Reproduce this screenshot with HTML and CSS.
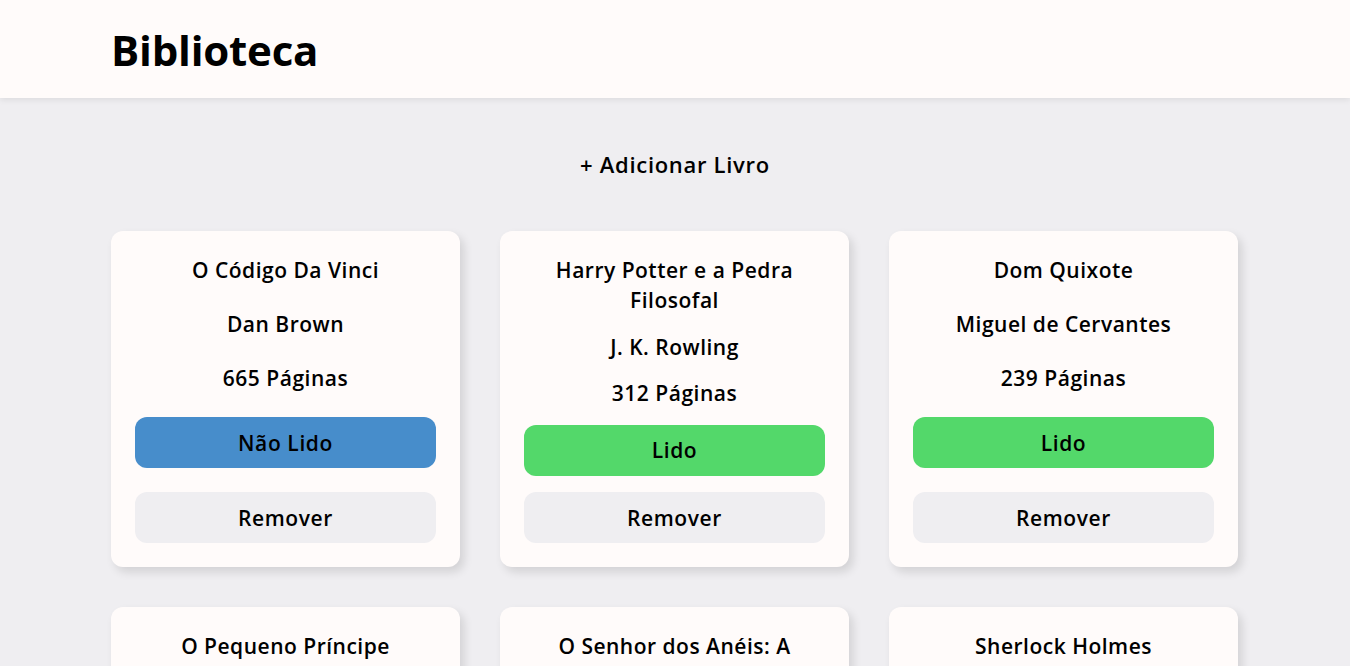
FILE: index.html
```html
<!DOCTYPE html>
<html lang="pt-BR">
<head>
<meta charset="utf-8">
<title>Biblioteca</title>
<link rel="stylesheet" href="styles.css">
</head>
<body>
<header class="topbar">
  <div class="wrap">
    <h1 class="brand">Biblioteca</h1>
  </div>
</header>
<main class="wrap main">
  <button class="add-btn">+ Adicionar Livro</button>
  <section class="grid">
    <article class="card">
      <p class="title">O Código Da Vinci</p>
      <p>Dan Brown</p>
      <p>665 Páginas</p>
      <button class="btn unread">Não Lido</button>
      <button class="btn remove">Remover</button>
    </article>
    <article class="card">
      <p class="title">Harry Potter e a Pedra Filosofal</p>
      <p>J. K. Rowling</p>
      <p>312 Páginas</p>
      <button class="btn read">Lido</button>
      <button class="btn remove">Remover</button>
    </article>
    <article class="card">
      <p class="title">Dom Quixote</p>
      <p>Miguel de Cervantes</p>
      <p>239 Páginas</p>
      <button class="btn read">Lido</button>
      <button class="btn remove">Remover</button>
    </article>
    <article class="card">
      <p class="title">O Pequeno Príncipe</p>
      <p>Antoine de Saint-Exupéry</p>
      <p>96 Páginas</p>
      <button class="btn read">Lido</button>
      <button class="btn remove">Remover</button>
    </article>
    <article class="card">
      <p class="title">O Senhor dos Anéis: A Sociedade do Anel</p>
      <p>J. R. R. Tolkien</p>
      <p>576 Páginas</p>
      <button class="btn unread">Não Lido</button>
      <button class="btn remove">Remover</button>
    </article>
    <article class="card">
      <p class="title">Sherlock Holmes</p>
      <p>Arthur Conan Doyle</p>
      <p>480 Páginas</p>
      <button class="btn read">Lido</button>
      <button class="btn remove">Remover</button>
    </article>
  </section>
</main>
</body>
</html>
```

FILE: styles.css
```css
* {
  box-sizing: border-box;
}

html, body {
  margin: 0;
  padding: 0;
}

body {
  background: #efeef1;
  font-family: "Open Sans", "Noto Sans", sans-serif;
  color: #000;
}

.wrap {
  width: 1128px;
  margin: 0 auto;
}

.topbar {
  background: #fffbfa;
  height: 98px;
  box-shadow: 0 2px 6px rgba(0, 0, 0, 0.08);
  position: relative;
  z-index: 1;
}

.topbar .wrap {
  height: 100%;
  display: flex;
  align-items: center;
}

.brand {
  margin: 0;
  padding-top: 2px;
  font-size: 42px;
  font-weight: 700;
  letter-spacing: -0.2px;
  line-height: 1;
}

.main {
  display: flex;
  flex-direction: column;
  align-items: center;
  padding-top: 50px;
}

.add-btn {
  border: none;
  background: transparent;
  font-family: inherit;
  font-size: 22px;
  font-weight: 600;
  letter-spacing: 0.7px;
  color: #000;
  line-height: 32px;
  padding: 0 12px;
  cursor: pointer;
}

.grid {
  margin-top: 51px;
  width: 100%;
  display: grid;
  grid-template-columns: repeat(3, 349px);
  gap: 40px;
  padding-bottom: 40px;
}

.card {
  background: #fffbfa;
  border-radius: 12px;
  box-shadow: 4px 5px 10px rgba(0, 0, 0, 0.12);
  padding: 24px;
  display: flex;
  flex-direction: column;
  justify-content: space-between;
  gap: 16px;
  min-height: 336px;
}

.card p {
  margin: 0;
  text-align: center;
  font-size: 21px;
  font-weight: 600;
  letter-spacing: 0.5px;
  line-height: 30px;
  padding: 0 30px;
}

.btn {
  border: none;
  border-radius: 12px;
  height: 51px;
  font-family: inherit;
  font-size: 21px;
  font-weight: 600;
  letter-spacing: 0.6px;
  color: #000;
  cursor: pointer;
}

.unread {
  background: #478dcb;
}

.read {
  background: #53d86a;
}

.remove {
  background: #efeef1;
}
```
